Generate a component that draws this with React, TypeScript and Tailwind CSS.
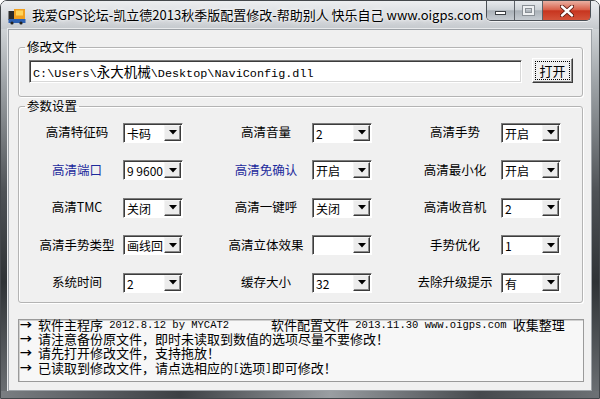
import React from 'react';

const CJK = /([\u2190-\u21ff\u3000-\u9fff\uff00-\uffef]+)/;

function Mixed({ text, cjk, latin }: { text: string; cjk: string; latin: string }) {
  const parts = text.split(CJK).filter((p) => p !== '');
  return (
    <>
      {parts.map((p, i) => (
        <span key={i} className={CJK.test(p) ? cjk : latin}>
          {p}
        </span>
      ))}
    </>
  );
}

const cn = "font-['Noto_Sans_CJK_SC',sans-serif]";
const mono = "font-['Liberation_Mono','DejaVu_Sans_Mono',monospace]";

function Arrow() {
  return (
    <div className="mr-[1px] my-[1px] flex w-[17px] shrink-0 items-center justify-center border border-t-[#f4f4f4] border-l-[#f4f4f4] border-r-[#3a3a3a] border-b-[#3a3a3a] bg-[#ececec] shadow-[inset_-1px_-1px_0_#8a8a8a]">
      <svg width="8" height="5" viewBox="0 0 8 5">
        <path d="M0 0h8L4 4.5z" fill="#000" />
      </svg>
    </div>
  );
}

function Combo({ value }: { value: string }) {
  return (
    <div className="ml-[6px] flex h-[20px] w-[60px] shrink-0 border border-t-[#7c7c7c] border-l-[#7c7c7c] border-r-white border-b-white bg-white shadow-[inset_1px_1px_0_#3c3c3c]">
      <div className={`min-w-0 flex-1 overflow-hidden whitespace-nowrap pl-[3px] pt-[1px] text-[12px] leading-[18px] text-black ${cn}`}>
        {value}
      </div>
      <Arrow />
    </div>
  );
}

type Cell = { label: string; value: string; blue?: boolean };

const rows: Cell[][] = [
  [
    { label: '高清特征码', value: '卡码' },
    { label: '高清音量', value: '2' },
    { label: '高清手势', value: '开启' },
  ],
  [
    { label: '高清端口', value: '9 9600', blue: true },
    { label: '高清免确认', value: '开启', blue: true },
    { label: '高清最小化', value: '开启' },
  ],
  [
    { label: '高清TMC', value: '关闭' },
    { label: '高清一键呼', value: '关闭' },
    { label: '高清收音机', value: '2' },
  ],
  [
    { label: '高清手势类型', value: '画线回' },
    { label: '高清立体效果', value: '' },
    { label: '手势优化', value: '1' },
  ],
  [
    { label: '系统时间', value: '2' },
    { label: '缓存大小', value: '32' },
    { label: '去除升级提示', value: '有' },
  ],
];

const logLines = [
  '请注意备份原文件，即时未读取到数值的选项尽量不要修改！',
  '请先打开修改文件，支持拖放！',
  '已读取到修改文件，请点选相应的[选项]即可修改！',
];

const group =
  'min-w-0 rounded-[3px] border border-[#b4b4b4] shadow-[inset_1px_1px_0_#ffffff,1px_1px_0_#ffffff]';

const logCjk = `text-[13px] ${cn}`;
const logLatin = `text-[10.5px] ${mono}`;

function AppIcon() {
  return (
    <svg width="18" height="18" viewBox="0 0 18 18">
      <rect x="0.5" y="4" width="6" height="9" fill="#2b2b2b" />
      <rect x="6" y="2" width="11" height="10" fill="#f0a020" />
      <rect x="8" y="3.5" width="7" height="5" fill="#ffd45a" />
      <rect x="0.5" y="12" width="17" height="4" fill="#2c5fb0" />
      <circle cx="4" cy="16" r="1.6" fill="#222" />
      <circle cx="13" cy="16" r="1.6" fill="#222" />
    </svg>
  );
}

function LogArrow() {
  return <span className={`w-[18px] shrink-0 text-[12px] font-bold ${cn}`}>→</span>;
}

const sideStrip =
  'w-[7px] shrink-0 bg-[#5d6165] bg-[linear-gradient(180deg,#cfd3d6_0%,#9ea3a7_15%,#4e5256_45%,#2f3336_70%,#6a6e72_100%)]';

export default function App() {
  return (
    <div className="h-[399px] w-[600px] overflow-hidden bg-white">
      <div className="flex h-[399px] w-[600px] flex-col overflow-hidden rounded-t-[7px] border border-[#43474b]">
        {/* title bar */}
        <div className="flex h-[28px] shrink-0 items-center bg-[#d8dbde] bg-[linear-gradient(180deg,#eceef0_0%,#d9dce0_50%,#c5c9cd_100%)]">
          <div className="ml-[7px] mr-[6px] mt-[1px]">
            <AppIcon />
          </div>
          <div className={`text-[13px] text-black [text-shadow:0_0_6px_#ffffff,0_0_3px_#ffffff] ${cn}`}>
            我爱GPS论坛-凯立德2013秋季版配置修改-帮助别人 快乐自己 www.oigps.com
          </div>
          <div className="ml-auto mr-[8px] flex h-[20px] self-start overflow-hidden rounded-b-[5px] border border-t-0 border-[#4a4f55] shadow-[0_1px_0_rgba(255,255,255,0.7)]">
            <div className="flex w-[28px] items-center justify-center border-r border-[#5d6268] bg-[#c4cad0] bg-[linear-gradient(180deg,#e7eaed_0%,#cdd2d7_45%,#aab1b8_52%,#c6ccd2_100%)]">
              <div className="mt-[5px] h-[4px] w-[11px] border border-[#3b3f44] bg-white" />
            </div>
            <div className="flex w-[28px] items-center justify-center border-r border-[#5d6268] bg-[#c4cad0] bg-[linear-gradient(180deg,#e7eaed_0%,#cdd2d7_45%,#aab1b8_52%,#c6ccd2_100%)]">
              <div className="h-[9px] w-[11px] border-2 border-[#eef0f2] shadow-[0_0_0_1px_#8a9096,inset_0_0_0_1px_#8a9096]" />
            </div>
            <div className="flex w-[47px] items-center justify-center bg-[#cf4a33] bg-[linear-gradient(180deg,#eab0a2_0%,#d9624c_45%,#c7351f_52%,#d4533a_100%)]">
              <svg width="14" height="12" viewBox="0 0 14 12">
                <path d="M2 1.5 12 10.5M12 1.5 2 10.5" stroke="#5a1a10" strokeWidth="4.2" strokeLinecap="round" />
                <path d="M2 1.5 12 10.5M12 1.5 2 10.5" stroke="#ffffff" strokeWidth="2.4" strokeLinecap="round" />
              </svg>
            </div>
          </div>
        </div>

        <div className="flex h-[362px] shrink-0">
          <div className={sideStrip} />
          {/* client area */}
          <div className="flex w-[584px] flex-col border border-[#9da2a7] bg-[#f0f0f0] shadow-[0_0_0_1px_#e8eaec]">
            <fieldset className={`mt-[9px] ml-[9px] w-[565px] ${group}`}>
              <legend className={`ml-[6px] px-[2px] text-[12.5px] leading-[16px] text-black ${cn}`}>修改文件</legend>
              <div className="flex items-end pb-[13px] pl-[10px] pt-[3px]">
                <div className="flex h-[23px] w-[493px] items-center border border-t-[#7c7c7c] border-l-[#7c7c7c] border-r-white border-b-white bg-white pl-[3px] shadow-[inset_1px_1px_0_#3c3c3c,inset_-1px_-1px_0_#d8d8d8]">
                  <span className="whitespace-pre text-black">
                    <Mixed text="C:\Users\永大机械\Desktop\NaviConfig.dll" cjk={`text-[13.5px] ${cn}`} latin={`text-[11.8px] ${mono}`} />
                  </span>
                </div>
                <div className="ml-[10px] flex h-[25px] w-[41px] items-center justify-center border border-t-white border-l-white border-r-[#3a3a3a] border-b-[#3a3a3a] bg-[#f0f0f0] shadow-[inset_-1px_-1px_0_#8a8a8a]">
                  <div className={`flex h-[17px] w-[33px] items-center justify-center outline-1 outline-dotted outline-black text-[13px] text-black ${cn}`}>
                    打开
                  </div>
                </div>
              </div>
            </fieldset>

            <fieldset className={`mt-[1px] ml-[9px] w-[565px] ${group}`}>
              <legend className={`ml-[6px] px-[2px] text-[12.5px] leading-[16px] text-black ${cn}`}>参数设置</legend>
              <div className="flex flex-col pl-[18px]">
                {rows.map((row, r) => (
                  <div key={r} className="grid h-[37.5px] grid-cols-[189px_189px_146px] items-center">
                    {row.map((c, i) => (
                      <div key={i} className="flex items-center">
                        <div
                          className={`w-[80px] shrink-0 text-center text-[12.5px] ${cn} ${c.blue ? 'text-[#1c2a9c]' : 'text-black'}`}
                        >
                          {c.label}
                        </div>
                        <Combo value={c.value} />
                      </div>
                    ))}
                  </div>
                ))}
              </div>
            </fieldset>

            <div className="ml-[9px] mt-[16px] h-[63px] w-[566px] border border-[#9a9a9a] bg-[#f7f7f7] shadow-[inset_1px_1px_0_#d0d0d0]">
              <div className="-mt-[2px] pl-[1px] leading-[14.4px] text-black">
                <div className="flex items-center whitespace-pre">
                  <LogArrow />
                  <span className="flex w-[233px] items-center">
                    <Mixed text="软件主程序 2012.8.12 by MYCAT2" cjk={logCjk} latin={logLatin} />
                  </span>
                  <Mixed text="软件配置文件 2013.11.30 www.oigps.com 收集整理" cjk={logCjk} latin={logLatin} />
                </div>
                {logLines.map((l, i) => (
                  <div key={i} className="flex items-center whitespace-pre">
                    <LogArrow />
                    <Mixed text={l} cjk={logCjk} latin={logLatin} />
                  </div>
                ))}
              </div>
            </div>
          </div>
          <div className={sideStrip} />
        </div>
        <div className="flex-1 bg-[#4f5357] bg-[linear-gradient(90deg,#7a7e82_0%,#3c4044_30%,#9a9ea2_55%,#45494d_80%,#6d7175_100%)]" />
      </div>
    </div>
  );
}
